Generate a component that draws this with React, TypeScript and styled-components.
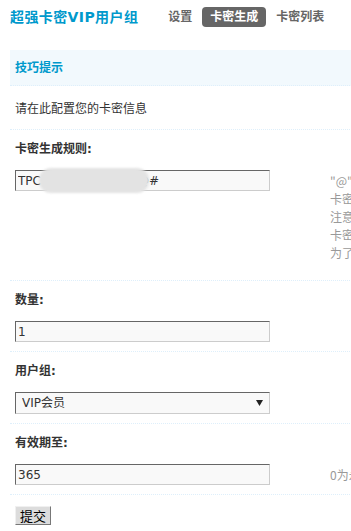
import React from "react";
import styled, { createGlobalStyle } from "styled-components";

const GlobalStyle = createGlobalStyle`
  html, body {
    margin: 0;
    padding: 0;
    overflow: hidden;
    background: #fff;
  }
  body {
    font-family: "DejaVu Sans", "Noto Sans CJK SC", sans-serif;
    font-size: 12px;
    color: #333;
  }
`;

const Page = styled.div`
  width: 760px;
  padding: 0 10px;
`;

const Header = styled.div`
  display: flex;
  align-items: center;
  height: 20px;
  padding: 7px 0 23px;
`;

const Title = styled.h3`
  margin: 0 22px 0 0;
  font-size: 14px;
  font-weight: bold;
  line-height: 20px;
  letter-spacing: 0.4px;
  color: #0099cc;
`;

const Nav = styled.ul`
  display: flex;
  gap: 2px;
  margin: 0;
  padding: 0;
  list-style: none;
`;

const Tab = styled.li<{ $active?: boolean }>`
  padding: 0 8px;
  height: 20px;
  line-height: 20px;
  font-size: 12px;
  font-weight: bold;
  border-radius: 4px;
  color: ${(p) => (p.$active ? "#fff" : "#666")};
  background: ${(p) => (p.$active ? "#666" : "transparent")};
`;

const Table = styled.div`
  display: flex;
  flex-direction: column;
`;

const TableHead = styled.div`
  height: 33px;
  padding: 2px 5px 0;
  line-height: 33px;
  background: #f2f9fd;
  border-bottom: 1px dotted #deeffb;
  font-weight: bold;
  color: #0099cc;
`;

const TipRow = styled.div`
  padding: 14px 5px 11px;
  line-height: 18px;
  border-bottom: 1px dotted #deeffb;
`;

const Field = styled.div`
  padding: 10px 5px 9px;
  border-bottom: 1px dotted #deeffb;
`;

const Label = styled.div`
  height: 18px;
  line-height: 18px;
  margin-bottom: 12px;
  font-weight: bold;
  color: #333;
`;

const ValueRow = styled.div`
  display: flex;
  align-items: flex-start;
`;

const FormCell = styled.div`
  width: 315px;
  flex: none;
`;

const InputWrap = styled.div`
  position: relative;
  width: 255px;
`;

const TextInput = styled.input`
  box-sizing: border-box;
  display: block;
  width: 255px;
  height: 21px;
  margin: 0;
  padding: 0 2px;
  border: 1px solid;
  border-color: #666 #ccc #ccc #666;
  background: #f9f9f9;
  font-family: "DejaVu Sans", "Noto Sans CJK SC", sans-serif;
  font-size: 12px;
  color: #333;
  outline: none;
`;

const Redact = styled.div`
  position: absolute;
  left: 24px;
  top: -2px;
  width: 110px;
  height: 25px;
  border-radius: 12px;
  background: #e3e3e3;
  filter: blur(1px);
`;

const SelectWrap = styled.div`
  position: relative;
  width: 255px;
`;

const Select = styled.select`
  box-sizing: border-box;
  display: block;
  width: 255px;
  height: 22px;
  margin: 0;
  padding: 0 6px;
  border: 1px solid;
  border-color: #666 #ccc #ccc #666;
  border-radius: 0;
  background: #f9f9f9;
  appearance: none;
  font-family: "DejaVu Sans", "Noto Sans CJK SC", sans-serif;
  font-size: 12px;
  color: #333;
  outline: none;
`;

const Arrow = styled.svg`
  position: absolute;
  right: 7px;
  top: 8px;
  pointer-events: none;
`;

const Tips = styled.div<{ $padBottom?: number }>`
  padding: 2px 0 ${(p) => p.$padBottom ?? 0}px;
  line-height: 18px;
  color: #999;
  white-space: nowrap;
  font-family: "Noto Sans CJK SC", "DejaVu Sans", sans-serif;
`;

const SubmitRow = styled.div`
  padding: 11px 5px 0;
`;

const Button = styled.button`
  height: 19px;
  margin: 0;
  padding: 0 4px;
  border: 1px solid;
  border-color: #f0f0f0 #777 #777 #f0f0f0;
  background: #dcdcdc;
  font-family: "Noto Sans CJK SC", sans-serif;
  font-size: 13px;
  line-height: 16px;
  color: #000;
`;

const ruleTips = [
  '"@"代表随机英文字母，"#"代表随机数字，"*"代表随机英文或数字',
  "卡密规则示例：TPC@@@@####，将生成以TPC开头的卡密",
  "注意：规则中至少需要包含一个随机字符",
  "卡密长度建议不少于12位，以免被猜测",
  "为了安全起见，请不要使用过于简单的规则",
];

export default function App() {
  return (
    <>
      <GlobalStyle />
      <Page>
        <Header>
          <Title>超强卡密VIP用户组</Title>
          <Nav>
            <Tab>设置</Tab>
            <Tab $active>卡密生成</Tab>
            <Tab>卡密列表</Tab>
          </Nav>
        </Header>
        <Table>
          <TableHead>技巧提示</TableHead>
          <TipRow>请在此配置您的卡密信息</TipRow>

          <Field>
            <Label>卡密生成规则:</Label>
            <ValueRow>
              <FormCell>
                <InputWrap>
                  <TextInput defaultValue="TPC@@@@@@@@@#" />
                  <Redact />
                </InputWrap>
              </FormCell>
              <Tips $padBottom={9}>
                {ruleTips.map((t) => (
                  <div key={t}>{t}</div>
                ))}
              </Tips>
            </ValueRow>
          </Field>

          <Field>
            <Label>数量:</Label>
            <ValueRow>
              <FormCell>
                <TextInput defaultValue="1" />
              </FormCell>
            </ValueRow>
          </Field>

          <Field>
            <Label>用户组:</Label>
            <ValueRow>
              <FormCell>
                <SelectWrap>
                  <Select defaultValue="vip">
                    <option value="vip">VIP会员</option>
                  </Select>
                  <Arrow width="7" height="6" viewBox="0 0 7 6">
                    <path d="M0 0H7L3.5 6Z" fill="#222" />
                  </Arrow>
                </SelectWrap>
              </FormCell>
            </ValueRow>
          </Field>

          <Field>
            <Label>有效期至:</Label>
            <ValueRow>
              <FormCell>
                <TextInput defaultValue="365" />
              </FormCell>
              <Tips>0为永久有效，单位：天</Tips>
            </ValueRow>
          </Field>

          <SubmitRow>
            <Button type="button">提交</Button>
          </SubmitRow>
        </Table>
      </Page>
    </>
  );
}
